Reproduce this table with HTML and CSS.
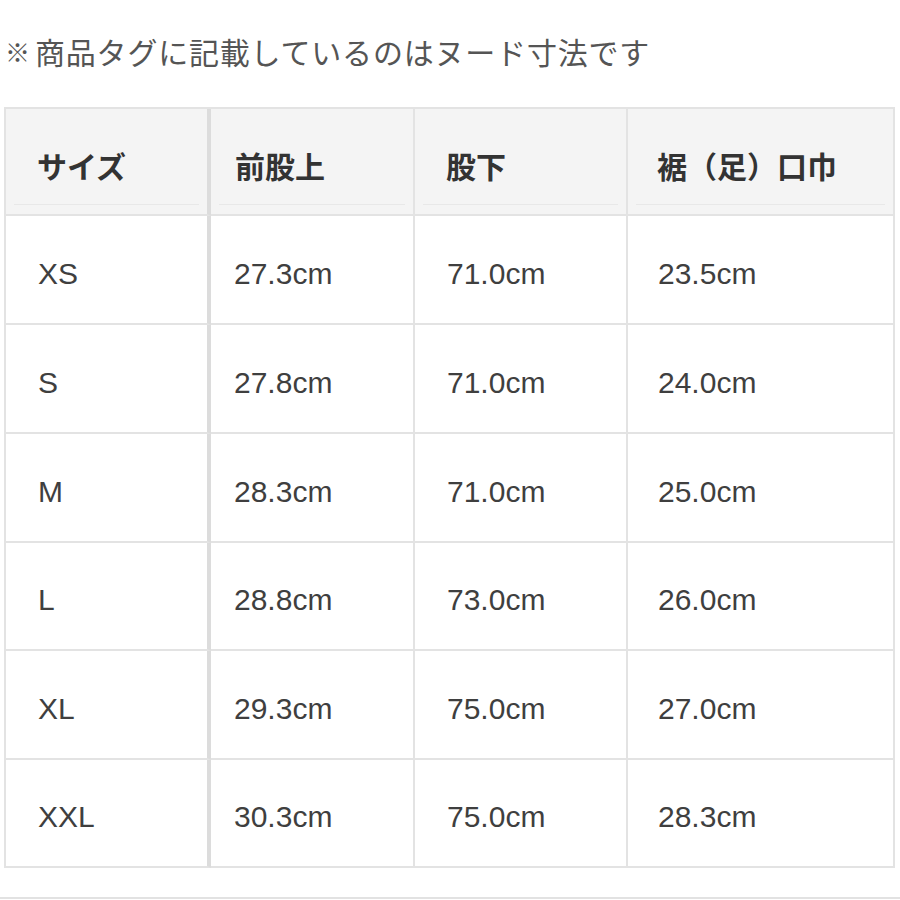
FILE: index.html
```html
<!DOCTYPE html>
<html lang="ja">
<head>
<meta charset="utf-8">
<title>サイズ表</title>
<link rel="stylesheet" href="styles.css">
</head>
<body>
<p class="note"><span class="mark">※</span>商品タグに記載しているのはヌード寸法です</p>
<div class="size-table" role="table">
  <div class="cell head c1" role="columnheader">サイズ</div>
  <div class="cell head c2" role="columnheader">前股上</div>
  <div class="cell head c3" role="columnheader">股下</div>
  <div class="cell head c4" role="columnheader">裾（足）口巾</div>

  <div class="cell c1">XS</div>
  <div class="cell c2">27.3cm</div>
  <div class="cell c3">71.0cm</div>
  <div class="cell c4">23.5cm</div>

  <div class="cell c1">S</div>
  <div class="cell c2">27.8cm</div>
  <div class="cell c3">71.0cm</div>
  <div class="cell c4">24.0cm</div>

  <div class="cell c1">M</div>
  <div class="cell c2">28.3cm</div>
  <div class="cell c3">71.0cm</div>
  <div class="cell c4">25.0cm</div>

  <div class="cell c1">L</div>
  <div class="cell c2">28.8cm</div>
  <div class="cell c3">73.0cm</div>
  <div class="cell c4">26.0cm</div>

  <div class="cell c1">XL</div>
  <div class="cell c2">29.3cm</div>
  <div class="cell c3">75.0cm</div>
  <div class="cell c4">27.0cm</div>

  <div class="cell c1">XXL</div>
  <div class="cell c2">30.3cm</div>
  <div class="cell c3">75.0cm</div>
  <div class="cell c4">28.3cm</div>
</div>
<div class="rule"></div>
</body>
</html>
```
FILE: styles.css
```css
html, body {
  margin: 0;
  padding: 0;
  background: #ffffff;
}

body {
  width: 900px;
  overflow: hidden;
}

.note {
  margin: 0;
  padding: 36px 0 0 5px;
  height: 71px;
  box-sizing: border-box;
  margin-bottom: 36px;
  font-family: "Noto Sans CJK JP", "Noto Sans", sans-serif;
  font-size: 30px;
  line-height: 30px;
  letter-spacing: 0.8px;
  color: #555555;
  white-space: nowrap;
}

.mark {
  display: inline-block;
  width: 25px;
  margin-right: 5px;
  font-size: 25px;
  letter-spacing: 0;
  vertical-align: 2px;
}

.size-table {
  margin-left: 4px;
  width: 891px;
  box-sizing: border-box;
  display: grid;
  grid-template-columns: 205px 204px 213px 267px;
  grid-template-rows: 107px 109px 109px 109px 108px 109px 108px;
  border-top: 2px solid #e3e3e3;
  border-left: 2px solid #e3e3e3;
}

.cell {
  box-sizing: border-box;
  display: flex;
  align-items: center;
  padding-top: 8px;
  border-right: 2px solid #e3e3e3;
  border-bottom: 2px solid #e3e3e3;
  background: #ffffff;
  font-family: "Liberation Sans", Arial, sans-serif;
  font-size: 30px;
  line-height: 1;
  color: #3f3f3f;
  white-space: nowrap;
}

.cell.c1 {
  padding-left: 32px;
  border-right: 4px solid #dcdcdc;
}

.cell.c2 { padding-left: 23px; }
.cell.c3 { padding-left: 32px; }
.cell.c4 { padding-left: 30px; }

.cell.head {
  padding-top: 6px;
  font-family: "Noto Sans CJK JP", "Noto Sans", sans-serif;
  font-weight: 700;
  color: #333333;
  background-color: #f4f4f4;
  background-image: linear-gradient(#e8e8e8, #e8e8e8);
  background-repeat: no-repeat;
  background-size: calc(100% - 16px) 1px;
  background-position: 8px calc(100% - 9px);
}

.cell.head.c1 { padding-left: 31px; }
.cell.head.c2 { padding-left: 24px; }
.cell.head.c3 { padding-left: 31px; }
.cell.head.c4 { padding-left: 29px; }

.rule {
  margin-top: 29px;
  height: 2px;
  background: #e2e2e2;
}
```
